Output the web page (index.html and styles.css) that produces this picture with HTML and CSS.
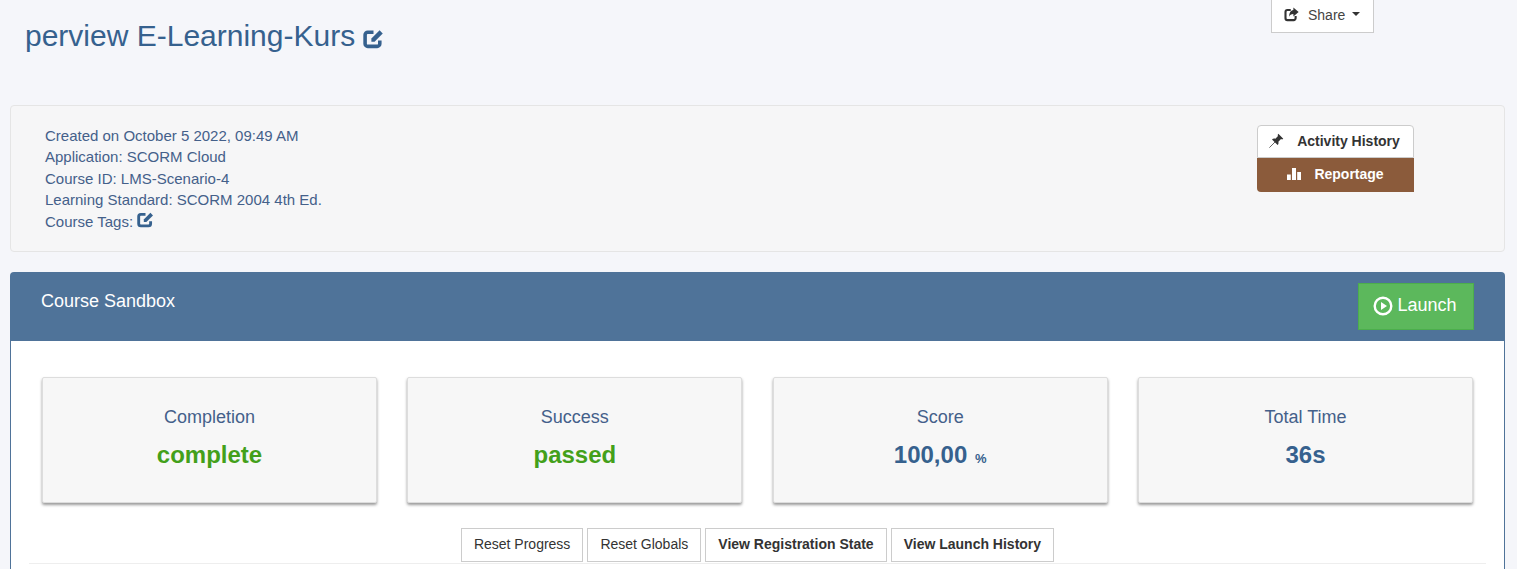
FILE: index.html
```html
<!DOCTYPE html>
<html lang="en">
<head>
<meta charset="UTF-8">
<title>perview E-Learning-Kurs</title>
<link rel="stylesheet" href="styles.css">
</head>
<body>

<div class="page-head">
  <h1>perview E-Learning-Kurs
    <svg class="edit-icon title-edit" viewBox="0 0 20 20"><use href="#icon-edit"/></svg>
  </h1>
  <button class="share-btn">
    <svg class="share-icon" viewBox="0 0 20 20">
      <path d="M15.500 12v3a2.500 2.500 0 0 1-2.500 2.500H4.500A2.500 2.500 0 0 1 2 15V6.500A2.500 2.500 0 0 1 4.500 4h4.500" fill="none" stroke="currentColor" stroke-width="2.800"/>
      <path d="M12.500 0.500 19.500 6.500 12.500 12.500V9.300C9.500 9.300 7.800 10.500 6.800 13 6.800 8 9 4.500 12.500 4z" fill="currentColor"/>
    </svg>
    Share
    <span class="caret"></span>
  </button>
</div>

<div class="well">
  <div class="course-info">
    <div>Created on October 5 2022, 09:49 AM</div>
    <div>Application: SCORM Cloud</div>
    <div>Course ID: LMS-Scenario-4</div>
    <div>Learning Standard: SCORM 2004 4th Ed.</div>
    <div>Course Tags: <svg class="edit-icon tags-edit" viewBox="0 0 20 20"><use href="#icon-edit"/></svg></div>
  </div>
  <div class="side-menu">
    <a class="side-link">
      <svg class="pin-icon" viewBox="0 0 20 20">
        <path d="M0.500 19.500 8 12" fill="none" stroke="currentColor" stroke-width="1"/>
        <path d="M12.500 1 19 7.500 17.500 8.500 16 8 12.500 11.500C13 13.500 12.500 15 11.500 16L4 8.500C5 7.500 6.500 7 8.500 7.500L12 4 11.500 2.500z" fill="currentColor"/>
      </svg>
      Activity History
    </a>
    <a class="side-link active">
      <svg class="chart-icon" viewBox="0 0 14 14">
        <path d="M0 7.500h3.800V13H0zM5 1h4v12H5zM10.200 5H14v8h-3.800z" fill="currentColor"/>
      </svg>
      Reportage
    </a>
  </div>
</div>

<div class="panel">
  <div class="panel-heading">
    <span class="panel-title">Course Sandbox</span>
    <button class="launch-btn">
      <svg class="play-icon" viewBox="0 0 20 20">
        <circle cx="10" cy="10" r="8.300" fill="none" stroke="currentColor" stroke-width="2.400"/>
        <path d="M8 6 14 10 8 14z" fill="currentColor"/>
      </svg>
      Launch
    </button>
  </div>
  <div class="panel-body">
    <div class="stats">
      <div class="stat">
        <div class="stat-label">Completion</div>
        <div class="stat-value good">complete</div>
      </div>
      <div class="stat">
        <div class="stat-label">Success</div>
        <div class="stat-value good">passed</div>
      </div>
      <div class="stat">
        <div class="stat-label">Score</div>
        <div class="stat-value">100,00 <small>%</small></div>
      </div>
      <div class="stat">
        <div class="stat-label">Total Time</div>
        <div class="stat-value">36s</div>
      </div>
    </div>
    <div class="actions">
      <button class="action-btn">Reset Progress</button>
      <button class="action-btn">Reset Globals</button>
      <button class="action-btn strong">View Registration State</button>
      <button class="action-btn strong">View Launch History</button>
    </div>
    <hr class="divider">
  </div>
</div>

<!-- edit icon, used three times -->
<svg class="icon-defs" width="0" height="0">
  <symbol id="icon-edit" viewBox="0 0 20 20">
    <path d="M16 12v3a2.500 2.500 0 0 1-2.500 2.500h-9A2.500 2.500 0 0 1 2 15V6.500A2.500 2.500 0 0 1 4.500 4H10" fill="none" stroke="currentColor" stroke-width="3.400"/>
    <path d="M8 10 15.800 2.200 18.800 5.200 11 13H8z" fill="currentColor"/>
  </symbol>
</svg>

</body>
</html>
```

FILE: styles.css
```css
body {
  display: flex;
  flex-direction: column;
  height: 100vh;
  margin: 0;
  background: #f5f6fa;
  font-family: "Liberation Sans", Arial, sans-serif;
  font-size: 14px;
  color: #3b5a85;
  overflow: hidden;
}

button {
  font-family: inherit;
}

.icon-defs {
  position: absolute;
}

.page-head {
  display: flex;
  justify-content: space-between;
  align-items: flex-start;
  height: 105px;
  padding: 0 143px 0 25px;
}

h1 {
  margin: 18px 0 0;
  font-size: 30px;
  font-weight: 400;
  line-height: 36px;
  color: #36618e;
}

.edit-icon {
  color: #36618e;
}

.title-edit {
  width: 21px;
  height: 21px;
  vertical-align: -3px;
}

.tags-edit {
  width: 17px;
  height: 17px;
  vertical-align: -1px;
}

.share-btn {
  display: flex;
  align-items: center;
  width: 103px;
  height: 33px;
  padding: 0 0 3px 12px;
  background: #fff;
  border: 1px solid #ccc;
  border-top: none;
  color: #444;
  font-size: 14px;
}

.share-icon {
  width: 15px;
  height: 15px;
  margin-right: 9px;
  color: #333;
}

.caret {
  margin-left: 7px;
  margin-bottom: 2px;
  border-top: 4px solid #333;
  border-left: 4px solid transparent;
  border-right: 4px solid transparent;
}

.well {
  display: flex;
  justify-content: space-between;
  height: 147px;
  box-sizing: border-box;
  margin: 0 12px 20px 10px;
  padding: 19px 90px 0 34px;
  background: #f6f6f7;
  border: 1px solid #e5e5e5;
  border-radius: 4px;
}

.course-info {
  margin-top: -0.300px;
  font-size: 15px;
  line-height: 21.500px;
  color: #44608a;
}

.side-menu {
  width: 157px;
}

.side-link {
  display: flex;
  align-items: center;
  justify-content: center;
  box-sizing: border-box;
  height: 33px;
  padding-bottom: 2px;
  background: #fff;
  border: 1px solid #ccc;
  border-radius: 4px 4px 0 0;
  color: #333;
  font-weight: 700;
}

.side-link.active {
  height: 34px;
  background: #8b5b3b;
  border: none;
  border-radius: 0 0 0 4px;
  color: #fff;
}

.pin-icon {
  width: 15px;
  height: 15px;
  margin-right: 13px;
  margin-left: -2px;
}

.chart-icon {
  width: 14px;
  height: 14px;
  margin-right: 13px;
}

.panel {
  flex: 1;
  margin: 0 12px 0 10px;
  background: #fff;
  border: 1px solid #4f7399;
  border-bottom: none;
  border-radius: 4px 4px 0 0;
}

.panel-heading {
  display: flex;
  justify-content: space-between;
  height: 68px;
  padding: 10px 30px 0;
  box-sizing: border-box;
  background: #4f7399;
  color: #fff;
}

.panel-title {
  margin-top: 9px;
  font-size: 18px;
  line-height: 19px;
}

.launch-btn {
  display: flex;
  align-items: center;
  justify-content: center;
  width: 116px;
  height: 47px;
  padding: 0 0 2px;
  background: #5cb85c;
  border: 1px solid #4cae4c;
  color: #fff;
  font-size: 18px;
}

.play-icon {
  width: 20px;
  height: 20px;
  margin-right: 4px;
  margin-left: -2px;
}

.panel-body {
  padding: 36px 18px 0;
}

.stats {
  display: flex;
  justify-content: space-between;
  padding: 0 13px;
}

.stat {
  width: 335px;
  height: 126px;
  box-sizing: border-box;
  padding-top: 28px;
  background: #f7f7f7;
  border: 1px solid #ddd;
  border-radius: 2px;
  box-shadow: 0 2px 3px rgba(0, 0, 0, 0.4);
  text-align: center;
}

.stat-label {
  font-size: 18px;
  line-height: 22px;
  color: #44608a;
}

.stat-value {
  margin-top: 13px;
  font-size: 24px;
  font-weight: 700;
  line-height: 28px;
  color: #36618e;
}

.stat-value.good {
  color: #43a01a;
}

.stat-value small {
  font-size: 13px;
  margin-left: 1px;
}

.actions {
  display: flex;
  justify-content: center;
  gap: 4px;
  margin-top: 25px;
}

.action-btn {
  height: 34px;
  padding: 0 12px 2px;
  background: #fff;
  border: 1px solid #ccc;
  color: #333;
  font-size: 14px;
}

.action-btn.strong {
  font-weight: 700;
}

.divider {
  margin: 1px 0 0;
  border: none;
  border-top: 1px solid #eee;
}
```
